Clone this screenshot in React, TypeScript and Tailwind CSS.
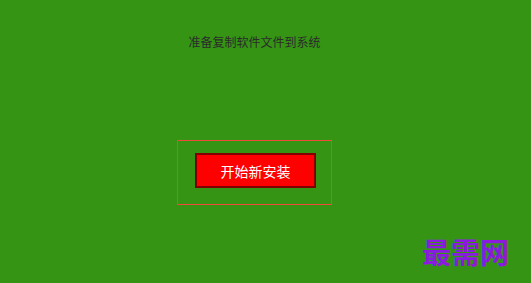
export default function App() {
  return (
    <div className="relative w-[531px] h-[283px] bg-[#359414] overflow-hidden" style={{ fontFamily: '"Noto Sans CJK SC", sans-serif' }}>
      <div className="flex flex-col items-center w-[509px]">
        <div className="mt-[33px] h-[17px] text-[12px] leading-[17px] text-[#2b2b2b]">准备复制软件文件到系统</div>
        <div className="mt-[90px] w-[155px] h-[65px] border border-[#f04a3c] flex items-start pl-[17px] pt-[12px]">
          <div className="w-[121px] h-[35px] bg-[#ff0000] border-2 border-[#800000] flex items-center justify-center text-white text-[14px] leading-none">
            开始新安装
          </div>
        </div>
      </div>
      <div className="absolute left-[422px] top-[233px] text-[29px] leading-[36px] font-semibold text-[#8b1ae0]" style={{ fontFamily: '"Noto Sans CJK SC", serif' }}>
        最需网
      </div>
    </div>
  );
}
